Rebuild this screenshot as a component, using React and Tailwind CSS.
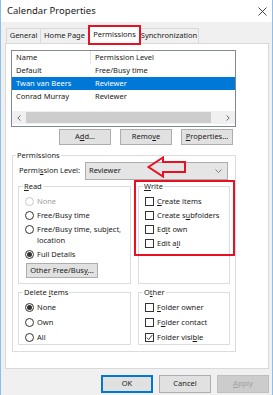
import React from "react";

const font = { fontFamily: '"Segoe UI", "Noto Sans", "Open Sans", sans-serif' };

function U({ children }) {
  return <span className="underline underline-offset-1">{children}</span>;
}

function Radio({ checked, disabled, children }) {
  return (
    <div className={`flex items-start gap-[3px] ${disabled ? "text-[#a0a0a0]" : "text-[#1a1a1a]"}`}>
      <span
        className={`mt-[1px] flex h-[9px] w-[9px] shrink-0 items-center justify-center rounded-full border bg-white ${
          disabled ? "border-[#c8c8c8]" : "border-[#333]"
        }`}
      >
        {checked && <span className="h-[5px] w-[5px] rounded-full bg-[#333]" />}
      </span>
      <span className="leading-[11px]">{children}</span>
    </div>
  );
}

function Check({ checked, children }) {
  return (
    <div className="flex items-center gap-[3px] whitespace-nowrap text-[#1a1a1a]">
      <span className="flex h-[9px] w-[9px] shrink-0 items-center justify-center border border-[#333] bg-white">
        {checked && (
          <svg width="7" height="7" viewBox="0 0 7 7">
            <path d="M0.8 3.6 L2.7 5.5 L6.3 1" fill="none" stroke="#333" strokeWidth="0.9" />
          </svg>
        )}
      </span>
      <span className="leading-[11px]">{children}</span>
    </div>
  );
}

function Group({ title, className = "", children }) {
  return (
    <div className={`relative border border-[#dcdcdc] pl-[6px] ${className}`}>
      <span className="absolute left-[4px] top-[-7px] bg-white px-[1px] leading-[12px] text-[#1a1a1a]">{title}</span>
      {children}
    </div>
  );
}

function Btn({ children, className = "" }) {
  return (
    <button className={`flex items-center justify-center whitespace-nowrap border border-[#adadad] bg-[#e1e1e1] text-[#1a1a1a] ${className}`}>
      {children}
    </button>
  );
}

export default function App() {
  return (
    <div
      className="h-[395px] w-[273px] overflow-hidden border-x border-[#8fbfe9] bg-[#f0f0f0] text-[7.5px] text-[#1a1a1a]"
      style={font}
    >
      {/* title bar */}
      <div className="flex h-[22px] items-center justify-between bg-white pl-[6px] pr-[5px]">
        <span className="text-[9.5px] text-[#1a1a1a]">Calendar Properties</span>
        <svg width="9" height="9" viewBox="0 0 9 9">
          <path d="M0.5 0.5 L8.5 8.5 M8.5 0.5 L0.5 8.5" stroke="#333" strokeWidth="0.9" />
        </svg>
      </div>

      {/* tabs */}
      <div className="mt-[4px] flex h-[17px] items-end pl-[5px]">
        <div className="flex h-[15px] w-[35px] items-center justify-center border border-b-0 border-[#d9d9d9] bg-[#f0f0f0]">General</div>
        <div className="flex h-[15px] w-[48px] items-center justify-center border border-b-0 border-l-0 border-[#d9d9d9] bg-[#f0f0f0]">Home Page</div>
        <div className="relative z-10 mb-[-1px] flex h-[18px] w-[51px] items-center justify-center bg-white">
          Permissions
          <span className="pointer-events-none absolute inset-[-1px] border-2 border-[#e81123]" />
        </div>
        <div className="flex h-[15px] w-[59px] items-center justify-center border border-b-0 border-l-0 border-[#d9d9d9] bg-[#f0f0f0]">Synchronization</div>
      </div>

      {/* tab panel */}
      <div className="ml-[4px] h-[326px] w-[264px] border border-[#d9d9d9] bg-white pl-[5px] pt-[6px]">
        {/* list */}
        <div className="h-[77px] w-[225px] border border-[#828790] bg-white">
          <div className="flex h-[13px] items-center">
            <span className="w-[78px] pl-[4px]">Name</span>
            <span className="h-full border-l border-[#e5e5e5] pl-[4px] leading-[13px]">Permission Level</span>
          </div>
          <div className="flex h-[13px] items-center">
            <span className="w-[78px] pl-[4px]">Default</span>
            <span className="pl-[5px]">Free/Busy time</span>
          </div>
          <div className="flex h-[13px] items-center bg-[#0078d7] text-white">
            <span className="w-[78px] pl-[4px]">Twan van Beers</span>
            <span className="pl-[5px]">Reviewer</span>
          </div>
          <div className="flex h-[13px] items-center">
            <span className="w-[78px] pl-[4px]">Conrad Murray</span>
            <span className="pl-[5px]">Reviewer</span>
          </div>
          <div className="h-[8px]" />
          <div className="flex h-[13px] items-center bg-[#f0f0f0]">
            <span className="flex w-[14px] justify-center">
              <svg width="4" height="6" viewBox="0 0 4 6"><path d="M3.5 0.5 L0.8 3 L3.5 5.5" fill="none" stroke="#606060" strokeWidth="0.9" /></svg>
            </span>
            <span className="h-[11px] w-[185px] bg-[#cdcdcd]" />
            <span className="flex-1" />
            <span className="flex w-[14px] justify-center">
              <svg width="4" height="6" viewBox="0 0 4 6"><path d="M0.5 0.5 L3.2 3 L0.5 5.5" fill="none" stroke="#606060" strokeWidth="0.9" /></svg>
            </span>
          </div>
        </div>

        {/* list buttons */}
        <div className="ml-[48px] mt-[2px] flex gap-[9px]">
          <Btn className="h-[16px] w-[52px]">A<U>d</U>d...</Btn>
          <Btn className="h-[16px] w-[52px]">Remo<U>v</U>e</Btn>
          <Btn className="h-[16px] w-[52px]"><U>P</U>roperties...</Btn>
        </div>

        {/* permissions group */}
        <div className="relative ml-[1px] mt-[10px] h-[197px] w-[224px] border border-[#dcdcdc] pt-[6px]">
          <span className="absolute left-[3px] top-[-7px] bg-white px-[1px] leading-[12px]">Permissions</span>
          <div className="flex h-[18px] items-center pl-[6px]">
            <span className="w-[66px] whitespace-nowrap">Permi<U>s</U>sion Level:</span>
            <div className="flex h-[18px] w-[143px] items-center justify-between border border-[#adadad] bg-[#e5e5e5] pl-[3px] pr-[5px]">
              <span>Reviewer</span>
              <svg width="7" height="4" viewBox="0 0 7 4">
                <path d="M0.5 0.5 L3.5 3.5 L6.5 0.5" fill="none" stroke="#707070" strokeWidth="0.9" />
              </svg>
            </div>
          </div>
          {/* red arrow overlay */}
          <svg className="absolute left-[134px] top-[0px]" width="40" height="22" viewBox="0 0 40 22">
            <path d="M1.5 11 L16 1.5 L16 6 L38 6 L38 16 L16 16 L16 20.5 Z" fill="none" stroke="#e81123" strokeWidth="2" />
          </svg>

          <div className="ml-[5px] mt-[6px] flex gap-[7px]">
            <Group title={<><U>R</U>ead</>} className="h-[98px] w-[113px] pt-[9px]">
              <div className="flex flex-col gap-[3px]">
                <Radio disabled>None</Radio>
                <Radio>Free/Busy time</Radio>
                <Radio>Free/Busy time, subject,<br />location</Radio>
                <Radio checked>Full Details</Radio>
              </div>
              <Btn className="mt-[3px] ml-[1px] h-[15px] w-[72px]">Other Free/Bus<U>y</U>...</Btn>
            </Group>
            <div className="relative">
              <Group title={<><U>W</U>rite</>} className="h-[98px] w-[92px] pt-[9px]">
                <div className="flex flex-col gap-[3px]">
                  <Check><U>C</U>reate items</Check>
                  <Check>Create s<U>u</U>bfolders</Check>
                  <Check>Ed<U>i</U>t own</Check>
                  <Check>Edit a<U>l</U>l</Check>
                </div>
              </Group>
              <div className="pointer-events-none absolute left-[-4px] top-[-6px] h-[76px] w-[101px] border-2 border-[#e81123]" />
            </div>
          </div>

          <div className="ml-[5px] mt-[8px] flex gap-[7px]">
            <Group title={<>Delete <U>i</U>tems</>} className="h-[53px] w-[113px] pt-[9px]">
              <div className="flex flex-col gap-[4px]">
                <Radio checked>None</Radio>
                <Radio>Own</Radio>
                <Radio>All</Radio>
              </div>
            </Group>
            <Group title={<>O<U>t</U>her</>} className="h-[53px] w-[92px] pt-[9px]">
              <div className="flex flex-col gap-[4px]">
                <Check><U>F</U>older owner</Check>
                <Check>F<U>o</U>lder contact</Check>
                <Check checked>Folder visi<U>b</U>le</Check>
              </div>
            </Group>
          </div>
        </div>
      </div>

      {/* dialog buttons */}
      <div className="mt-[6px] flex justify-end gap-[6px] pr-[3px]">
        <button className="flex h-[18px] w-[52px] items-center justify-center border-2 border-[#0078d7] bg-[#e1e1e1]">OK</button>
        <button className="flex h-[18px] w-[52px] items-center justify-center border border-[#adadad] bg-[#e1e1e1]">Cancel</button>
        <button className="flex h-[18px] w-[52px] items-center justify-center border border-[#bfbfbf] bg-[#cccccc] text-[#a0a0a0]"><U>A</U>pply</button>
      </div>
    </div>
  );
}
